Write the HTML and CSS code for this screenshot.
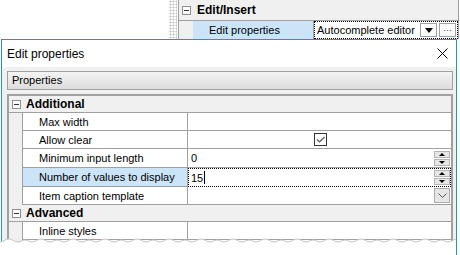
FILE: index.html
```html
<!DOCTYPE html>
<html lang="en">

<head>
    <meta charset="UTF-8">
    <title>Edit properties</title>
    <link rel="stylesheet" href="styles.css">
</head>

<body>
    <div class="backdrop">
        <div class="grip"></div>
        <div class="bg-grid">
            <div class="bg-group"><span class="toggle"></span>Edit/Insert</div>
            <div class="bg-row">
                <div class="bg-indent"></div>
                <div class="bg-name">Edit properties</div>
                <div class="bg-value">
                    <span>Autocomplete editor</span>
                    <span class="bg-btn drop"><i class="tri-down big"></i></span>
                    <span class="bg-btn more">···</span>
                </div>
            </div>
        </div>
    </div>

    <div class="dialog">
        <div class="titlebar">
            <span>Edit properties</span>
            <svg class="close" width="11" height="11" viewBox="0 0 11 11">
                <path d="M0.5 0.5 L10.5 10.5 M10.5 0.5 L0.5 10.5" stroke="#000" stroke-width="1" fill="none" />
            </svg>
        </div>
        <div class="body">
            <div class="tabbar">Properties</div>
            <div class="grid">
                <div class="group"><span class="toggle"></span>Additional</div>
                <div class="row">
                    <div class="indent"></div>
                    <div class="name">Max width</div>
                    <div class="value"></div>
                </div>
                <div class="row">
                    <div class="indent"></div>
                    <div class="name">Allow clear</div>
                    <div class="value center">
                        <span class="check">
                            <svg width="11" height="11" viewBox="0 0 11 11">
                                <path d="M2 5.5 L4.5 8 L9.5 3" stroke="#555" stroke-width="1.2" fill="none" />
                            </svg>
                        </span>
                    </div>
                </div>
                <div class="row tall">
                    <div class="indent"></div>
                    <div class="name">Minimum input length</div>
                    <div class="value">
                        <span>0</span>
                        <span class="spin"><span class="spin-btn"><i class="tri-up"></i></span><span class="spin-btn"><i class="tri-down"></i></span></span>
                    </div>
                </div>
                <div class="row tall">
                    <div class="indent"></div>
                    <div class="name selected">Number of values to display</div>
                    <div class="value editing">
                        <span>15</span><span class="caret"></span>
                        <span class="spin"><span class="spin-btn"><i class="tri-up"></i></span><span class="spin-btn"><i class="tri-down"></i></span></span>
                    </div>
                </div>
                <div class="row">
                    <div class="indent"></div>
                    <div class="name">Item caption template</div>
                    <div class="value">
                        <span class="combo">
                            <svg width="9" height="5" viewBox="0 0 9 5">
                                <path d="M0.5 0.5 L4.5 4.5 L8.5 0.5" stroke="#555" stroke-width="1" fill="none" />
                            </svg>
                        </span>
                    </div>
                </div>
                <div class="group short"><span class="toggle"></span>Advanced</div>
                <div class="row">
                    <div class="indent"></div>
                    <div class="name">Inline styles</div>
                    <div class="value"></div>
                </div>
                <div class="row">
                    <div class="indent"></div>
                    <div class="name">Css class</div>
                    <div class="value"></div>
                </div>
            </div>
        </div>
    </div>

    <svg class="torn" width="456" height="18" viewBox="0 0 456 18">
        <path fill="#fff" d="M0 5 c4 0 5 -3 9 -3 s5 3 9 3 c3 0 4 -2 7 -2 s4 2 7 2 c4 0 5 -3 9 -3 s5 3 9 3 c3 0 4 -2 7 -2 s4 2 7 2 c4 0 5 -3 9 -3 s5 3 9 3 c3 0 4 -2 7 -2 s4 2 7 2 c4 0 5 -3 9 -3 s5 3 9 3 c3 0 4 -2 7 -2 s4 2 7 2 c4 0 5 -3 9 -3 s5 3 9 3 c3 0 4 -2 7 -2 s4 2 7 2 c4 0 5 -3 9 -3 s5 3 9 3 c3 0 4 -2 7 -2 s4 2 7 2 c4 0 5 -3 9 -3 s5 3 9 3 c3 0 4 -2 7 -2 s4 2 7 2 c4 0 5 -3 9 -3 s5 3 9 3 c3 0 4 -2 7 -2 s4 2 7 2 c4 0 5 -3 9 -3 s5 3 9 3 c3 0 4 -2 7 -2 s4 2 7 2 c4 0 5 -3 9 -3 s5 3 9 3 c3 0 4 -2 7 -2 s4 2 7 2 c4 0 5 -3 9 -3 s5 3 9 3 c3 0 4 -2 7 -2 s4 2 7 2 c4 0 5 -3 9 -3 s5 3 9 3 c3 0 4 -2 7 -2 s4 2 7 2 c4 0 5 -3 9 -3 s5 3 9 3 c3 0 4 -2 7 -2 s4 2 7 2 c4 0 5 -3 9 -3 s5 3 9 3 c3 0 4 -2 7 -2 s4 2 7 2 c4 0 5 -3 9 -3 s5 3 9 3 c3 0 4 -2 7 -2 s4 2 7 2 L480 18 L0 18 Z" />
        <path fill="none" stroke="#c4c4c4" stroke-width="1" d="M0 5 c4 0 5 -3 9 -3 s5 3 9 3 c3 0 4 -2 7 -2 s4 2 7 2 c4 0 5 -3 9 -3 s5 3 9 3 c3 0 4 -2 7 -2 s4 2 7 2 c4 0 5 -3 9 -3 s5 3 9 3 c3 0 4 -2 7 -2 s4 2 7 2 c4 0 5 -3 9 -3 s5 3 9 3 c3 0 4 -2 7 -2 s4 2 7 2 c4 0 5 -3 9 -3 s5 3 9 3 c3 0 4 -2 7 -2 s4 2 7 2 c4 0 5 -3 9 -3 s5 3 9 3 c3 0 4 -2 7 -2 s4 2 7 2 c4 0 5 -3 9 -3 s5 3 9 3 c3 0 4 -2 7 -2 s4 2 7 2 c4 0 5 -3 9 -3 s5 3 9 3 c3 0 4 -2 7 -2 s4 2 7 2 c4 0 5 -3 9 -3 s5 3 9 3 c3 0 4 -2 7 -2 s4 2 7 2 c4 0 5 -3 9 -3 s5 3 9 3 c3 0 4 -2 7 -2 s4 2 7 2 c4 0 5 -3 9 -3 s5 3 9 3 c3 0 4 -2 7 -2 s4 2 7 2 c4 0 5 -3 9 -3 s5 3 9 3 c3 0 4 -2 7 -2 s4 2 7 2 c4 0 5 -3 9 -3 s5 3 9 3 c3 0 4 -2 7 -2 s4 2 7 2 c4 0 5 -3 9 -3 s5 3 9 3 c3 0 4 -2 7 -2 s4 2 7 2 c4 0 5 -3 9 -3 s5 3 9 3 c3 0 4 -2 7 -2 s4 2 7 2" />
    </svg>
</body>

</html>
```

FILE: styles.css
```css
* {
    box-sizing: border-box;
}

body {
    margin: 0;
    width: 460px;
    height: 255px;
    overflow: hidden;
    position: relative;
    background: #fff;
    font-family: "Liberation Sans", Arial, sans-serif;
    font-size: 11px;
    color: #000;
}

/* property grid behind the dialog */
.backdrop {
    display: flex;
    height: 39px;
    margin-left: 168px;
}

.grip {
    width: 8px;
    margin: 0 1px;
    background-image: radial-gradient(circle, #bdbdbd 0.9px, transparent 1.1px);
    background-size: 3px 3px;
}

.bg-grid {
    flex: 1;
    margin-right: 1px;
    border-left: 1px solid #a0a0a0;
    border-right: 1px solid #a0a0a0;
}

.bg-group {
    height: 21px;
    display: flex;
    align-items: center;
    padding-left: 3px;
    background: #f0f0f0;
    border-bottom: 1px solid #a0a0a0;
    font-size: 12px;
    font-weight: bold;
}

.bg-row {
    display: flex;
    height: 18px;
}

.bg-indent {
    width: 14px;
    background: #f0f0f0;
}

.bg-name {
    width: 121px;
    padding-left: 16px;
    line-height: 18px;
    background: #cce4f7;
    border-right: 1px solid #a0a0a0;
}

.bg-value {
    flex: 1;
    display: flex;
    align-items: center;
    padding: 0 1px 0 2px;
    border: 1px dotted #000;
}

.bg-value span:first-child {
    margin-right: auto;
}

.bg-btn {
    width: 17px;
    height: 14px;
    margin-left: 2px;
    display: flex;
    align-items: center;
    justify-content: center;
    background: #fff;
    border: 1px solid #a0a0a0;
    font-size: 9px;
    color: #444;
}

/* dialog */
.dialog {
    width: 456px;
    height: 216px;
    margin-left: 1px;
    border: 1px solid #2a96bd;
    border-bottom: 0;
    background: #f0f0f0;
    overflow: hidden;
}

.titlebar {
    height: 27px;
    display: flex;
    align-items: center;
    justify-content: space-between;
    padding: 0 8px 0 5px;
    background: #fff;
    font-size: 12px;
}

.body {
    padding: 4px 3px 0 5px;
}

.tabbar {
    height: 19px;
    padding-left: 4px;
    line-height: 17px;
    border: 1px solid #a0a0a0;
    background: linear-gradient(#f4f4f4, #dcdcdc);
}

.grid {
    margin-top: 4px;
    background: #fff;
    border: 2px solid #a0a0a0;
    border-bottom: 0;
}

.group {
    height: 17px;
    display: flex;
    align-items: center;
    padding-left: 3px;
    background: #f0f0f0;
    border-bottom: 1px solid #a0a0a0;
    font-size: 12px;
    font-weight: bold;
}

.group.short {
    height: 17px;
}

.toggle {
    position: relative;
    width: 9px;
    height: 9px;
    margin-right: 5px;
    background: #fff;
    border: 1px solid #8f8f8f;
}

.bg-group .toggle {
    margin-right: 6px;
}

.toggle::after {
    content: "";
    position: absolute;
    left: 1px;
    top: 3px;
    width: 5px;
    height: 1px;
    background: #333;
}

.row {
    display: flex;
    height: 18px;
}

.row.tall {
    height: 19px;
}

.indent {
    width: 14px;
    background: #f0f0f0;
    border-right: 1px solid #a0a0a0;
}

.name {
    width: 165px;
    padding-left: 16px;
    display: flex;
    align-items: center;
    border-right: 1px solid #a0a0a0;
    border-bottom: 1px solid #a0a0a0;
}

.name.selected {
    background: #cce4f7;
}

.value {
    flex: 1;
    display: flex;
    align-items: center;
    padding: 0 1px 0 3px;
    border-bottom: 1px solid #a0a0a0;
}

.value.center {
    justify-content: center;
}

.value.editing {
    padding: 0 0 0 2px;
    border: 1px dotted #000;
}

.caret {
    width: 1px;
    height: 13px;
    margin-left: 1px;
    background: #000;
}

.check {
    width: 13px;
    height: 13px;
    display: flex;
    align-items: center;
    justify-content: center;
    border: 1px solid #333;
}

.spin {
    margin-left: auto;
    display: flex;
    flex-direction: column;
    gap: 1px;
}

.spin-btn {
    width: 16px;
    height: 7px;
    display: flex;
    align-items: center;
    justify-content: center;
    background: #e6e6e6;
    border: 1px solid #b4b4b4;
}

.tri-up,
.tri-down {
    width: 0;
    height: 0;
    border-left: 3px solid transparent;
    border-right: 3px solid transparent;
}

.tri-up {
    border-bottom: 3px solid #000;
}

.tri-down {
    border-top: 3px solid #000;
}

.tri-down.big {
    border-left-width: 4px;
    border-right-width: 4px;
    border-top-width: 5px;
}

.combo {
    margin-left: auto;
    width: 16px;
    height: 15px;
    display: flex;
    align-items: center;
    justify-content: center;
    background: #e6e6e6;
    border: 1px solid #adadad;
}

.torn {
    position: absolute;
    left: 0;
    top: 237px;
}
```
